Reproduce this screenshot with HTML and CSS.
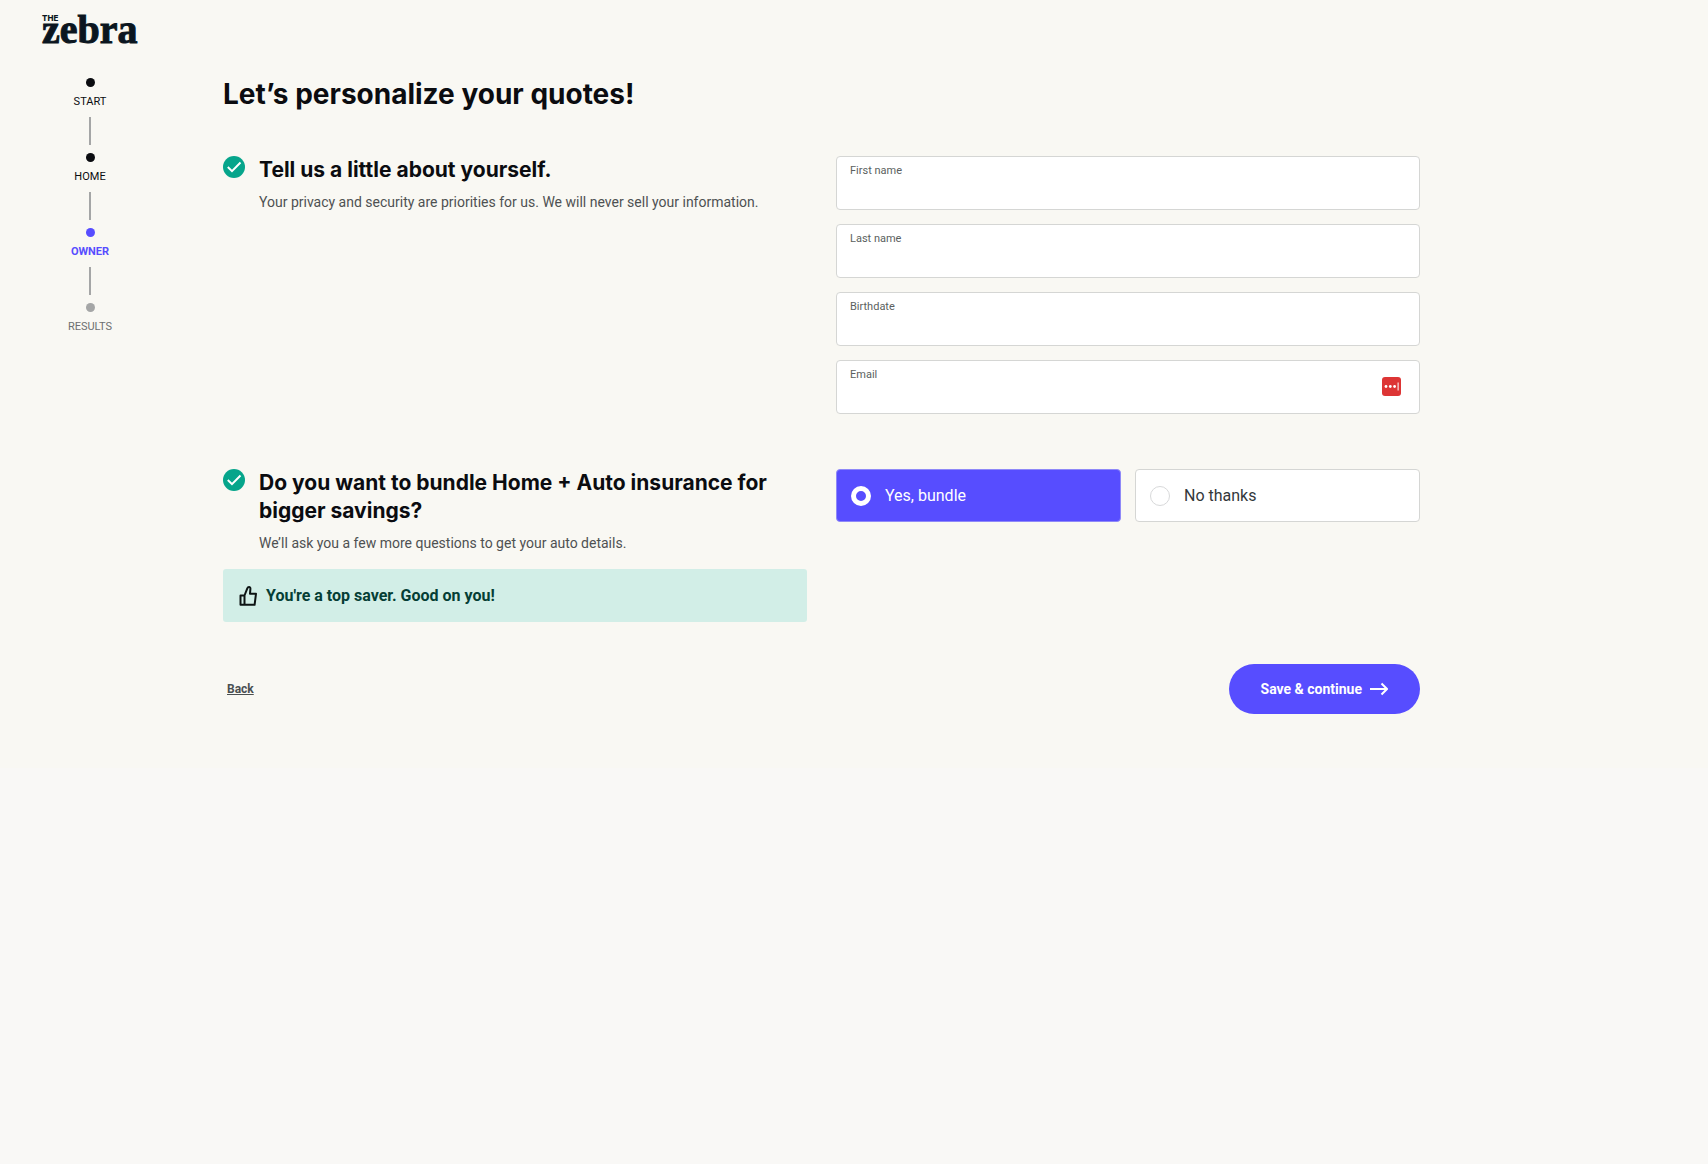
FILE: index.html
```html
<!DOCTYPE html>
<html lang="en">
<head>
<meta charset="utf-8">
<meta name="viewport" content="width=device-width, initial-scale=1">
<title>The Zebra - Personalize your quotes</title>
<link rel="stylesheet" href="styles.css">
</head>
<body>
<div class="page">
<header class="site-header">
  <a class="logo" href="#"><span class="logo-the">THE</span><span class="logo-name">zebra</span></a>
</header>
<div class="layout">
  <nav aria-label="Progress">
    <ol class="steps">
      <li class="step">START</li>
      <li class="step">HOME</li>
      <li class="step step-current" aria-current="step">OWNER</li>
      <li class="step step-next">RESULTS</li>
    </ol>
  </nav>
  <main class="main">
    <h1 class="title">Let’s personalize your quotes!</h1>
    <form>
      <section class="question">
        <div class="prompt">
          <svg class="check" viewBox="0 0 22 22" aria-hidden="true"><circle cx="11" cy="11" r="11"/><path d="M4.800 11l4.200 4.200L17.500 6.500"/></svg>
          <div>
            <h2 class="heading">Tell us a little about yourself.</h2>
            <p class="hint">Your privacy and security are priorities for us. We will never sell your information.</p>
          </div>
        </div>
        <div class="fields">
          <div class="field"><label for="first">First name</label><input id="first" type="text"></div>
          <div class="field"><label for="last">Last name</label><input id="last" type="text"></div>
          <div class="field"><label for="birth">Birthdate</label><input id="birth" type="text"></div>
          <div class="field">
            <label for="email">Email</label><input id="email" type="email">
            <svg class="autofill" viewBox="0 0 19 19" aria-hidden="true"><rect width="19" height="19" rx="3" fill="#dd3535"/><g fill="#fff"><circle cx="4" cy="9.5" r="1.4"/><circle cx="8.3" cy="9.5" r="1.4"/><circle cx="12.6" cy="9.5" r="1.4"/><rect x="15.6" y="5.5" width="1" height="8"/></g></svg>
          </div>
        </div>
      </section>
      <section class="question">
        <div>
          <div class="prompt">
            <svg class="check" viewBox="0 0 22 22" aria-hidden="true"><circle cx="11" cy="11" r="11"/><path d="M4.800 11l4.200 4.200L17.500 6.500"/></svg>
            <div>
              <h2 class="heading">Do you want to bundle Home + Auto insurance for bigger savings?</h2>
              <p class="hint">We’ll ask you a few more questions to get your auto details.</p>
            </div>
          </div>
          <p class="banner">
            <svg class="thumb" viewBox="0 0 18 20" aria-hidden="true"><path d="M1.500 9.500H5.500V18.800H1.500ZM5.500 9.500L8.300 2.300C8.700 1.300 9.400 1 10 1C11 1 11.500 1.800 11.400 2.800L11 7.700H17L15.600 18.800H5.500"/></svg>
            You're a top saver. Good on you!
          </p>
        </div>
        <div class="choices">
          <label class="choice"><input type="radio" name="bundle" checked>Yes, bundle</label>
          <label class="choice"><input type="radio" name="bundle">No thanks</label>
        </div>
      </section>
      <div class="actions">
        <a class="back" href="#">Back</a>
        <button class="save" type="submit">Save &amp; continue
          <svg class="arrow" viewBox="0 0 18 14" aria-hidden="true"><path d="M0 7h17M11.500 1.500L17 7l-5.500 5.500"/></svg>
        </button>
      </div>
    </form>
  </main>
</div>
</div>
</body>
</html>
```
FILE: styles.css
```css
* { box-sizing: border-box; }

body {
  margin: 0;
  background: #f9f8f6;
  color: #0b0c10;
  font-family: Roboto, "Liberation Sans", sans-serif;
}

h1, h2, p, ol { margin: 0; padding: 0; }

.page { background: #f9f8f3; }

.site-header {
  display: flex;
  padding: 14px 42px 0;
}

.logo {
  display: flex;
  flex-direction: column;
  color: #0b1620;
  text-decoration: none;
}

.logo-the {
  font: 800 8px/8px Inter, sans-serif;
}

.logo-name {
  font: bold 40px/16px "Liberation Serif", serif;
  -webkit-text-stroke: 1px;
}

.layout {
  display: grid;
  grid-template-columns: 180px minmax(0, 1fr);
  padding-top: 40px;
}

.steps {
  display: flex;
  flex-direction: column;
  gap: 8px;
  list-style: none;
}

.step {
  display: flex;
  flex-direction: column;
  align-items: center;
  gap: 8px;
  font-size: 11px;
  line-height: 14px;
}

.step::before {
  content: "";
  width: 9px;
  height: 9px;
  border-radius: 50%;
  background: currentColor;
}

.step:not(:last-child)::after {
  content: "";
  width: 2px;
  height: 28px;
  background: #a5a6a6;
}

.step-current { color: #574dff; font-weight: 700; }
.step-next { color: #6d6f70; }
.step-next::before { background: #a5a6a6; }

.main {
  max-width: 1240px;
  padding: 0 0 54px 43px;
}

.title {
  font: 700 28px/32px Inter, sans-serif;
}

.question {
  display: grid;
  grid-template-columns: 1fr 1fr;
  align-items: start;
  gap: 29px;
  padding-top: 46px;
}

.question + .question { padding-top: 55px; }

.prompt {
  display: flex;
  gap: 14px;
}

.check {
  flex: none;
  width: 22px;
  height: 22px;
  fill: #06a58b;
}

.check path { fill: none; stroke: #fff; stroke-width: 2; }

.heading {
  font: 700 21px/28px Inter, sans-serif;
}

.hint {
  padding-top: 8px;
  color: #4e5152;
  font-size: 14px;
  line-height: 20px;
}

.banner {
  display: flex;
  align-items: center;
  gap: 9px;
  height: 53px;
  margin-top: 16px;
  padding: 0 16px;
  border-radius: 3px;
  background: #d2eee7;
  color: #053e35;
  font-size: 16px;
  font-weight: 700;
}

.thumb {
  width: 18px;
  height: 20px;
  fill: none;
  stroke: #0d1414;
  stroke-width: 2;
  stroke-linejoin: round;
}

.fields { display: grid; gap: 14px; }

.field { position: relative; }

.field label {
  position: absolute;
  top: 8px;
  left: 14px;
  color: #5b5f60;
  font-size: 11px;
  line-height: 14px;
}

.field input {
  display: block;
  width: 100%;
  height: 54px;
  padding: 20px 14px 6px;
  border: 1px solid #d5d6d4;
  border-radius: 4px;
  background: #fff;
  font: inherit;
}

.autofill {
  position: absolute;
  top: 17px;
  right: 19px;
  width: 19px;
  height: 19px;
}

.choices {
  display: grid;
  grid-template-columns: 1fr 1fr;
  gap: 14px;
}

.choice {
  display: flex;
  align-items: center;
  gap: 14px;
  height: 53px;
  padding: 0 14px;
  border: 1px solid #d5d6d4;
  border-radius: 4px;
  background: #fff;
  color: #33383a;
  font-size: 16px;
}

.choice input {
  appearance: none;
  width: 20px;
  height: 20px;
  margin: 0;
  border: 1px solid #d8d9da;
  border-radius: 50%;
  background: #fff;
}

.choice:has(input:checked) {
  border-color: #8f89f8;
  background: #574dff;
  color: #fff;
}

.choice input:checked {
  border: 5px solid #fff;
  background: #574dff;
}

.actions {
  display: flex;
  align-items: center;
  justify-content: space-between;
  padding: 42px 0 0 4px;
}

.back {
  color: #4a4f51;
  font-size: 12px;
  font-weight: 700;
}

.save {
  display: flex;
  align-items: center;
  gap: 8px;
  height: 50px;
  padding: 0 32px;
  border: 0;
  border-radius: 25px;
  background: #574dff;
  color: #fff;
  font: 700 14px Roboto, sans-serif;
}

.arrow {
  width: 18px;
  height: 14px;
  fill: none;
  stroke: #fff;
  stroke-width: 2;
}
```
